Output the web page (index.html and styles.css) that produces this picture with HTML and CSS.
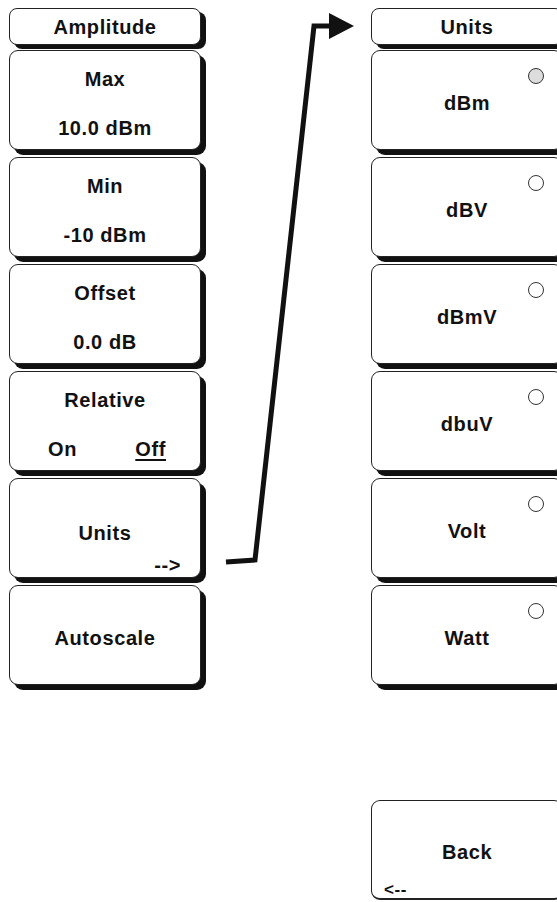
FILE: index.html
```html
<!DOCTYPE html>
<html>
<head>
<meta charset="utf-8">
<link rel="stylesheet" href="styles.css">
</head>
<body>
<div class="page">
  <div class="col">
    <div class="hdr">Amplitude</div>
    <div class="btn double"><div class="ln">Max</div><div class="ln">10.0 dBm</div></div>
    <div class="btn double"><div class="ln">Min</div><div class="ln">-10 dBm</div></div>
    <div class="btn double"><div class="ln">Offset</div><div class="ln">0.0 dB</div></div>
    <div class="btn double"><div class="ln">Relative</div><div class="ln onoff"><span>On</span><span class="sel">Off</span></div></div>
    <div class="btn withsub"><div class="ln">Units</div><div class="sub">--&gt;</div></div>
    <div class="btn single"><div class="ln">Autoscale</div></div>
  </div>
  <div class="col right">
    <div class="hdr">Units</div>
    <div class="btn single"><span class="radio on"></span><div class="ln">dBm</div></div>
    <div class="btn single"><span class="radio"></span><div class="ln">dBV</div></div>
    <div class="btn single"><span class="radio"></span><div class="ln">dBmV</div></div>
    <div class="btn single"><span class="radio"></span><div class="ln">dbuV</div></div>
    <div class="btn single"><span class="radio"></span><div class="ln">Volt</div></div>
    <div class="btn single"><span class="radio"></span><div class="ln">Watt</div></div>
    <div class="btn back"><div class="ln backlbl">Back</div><div class="backsub">&lt;--</div></div>
  </div>
  <svg class="connector" width="557" height="902" viewBox="0 0 557 902">
    <polyline points="226,562 255,560 314,26 332,26" fill="none" stroke="#111" stroke-width="5" stroke-linejoin="miter"/>
    <polygon points="329,13 354,26 329,39" fill="#111"/>
  </svg>
</div>
</body>
</html>
```

FILE: styles.css
```css
html, body {
  margin: 0;
  padding: 0;
  background: #fff;
  overflow: hidden;
  width: 557px;
  height: 902px;
}
.page {
  position: relative;
  display: flex;
  align-items: flex-start;
  gap: 170px;
  padding: 8px 0 0 9px;
  width: 557px;
  height: 902px;
  box-sizing: border-box;
  font-family: "Liberation Sans", Arial, sans-serif;
  font-weight: bold;
  font-size: 20px;
  letter-spacing: 0.6px;
  color: #111;
}
.col {
  display: flex;
  flex-direction: column;
  width: 192px;
  flex: 0 0 192px;
}
.hdr {
  flex-shrink: 0;
  box-sizing: border-box;
  height: 37px;
  border: 1px solid #222;
  border-radius: 8px;
  background: #fff;
  box-shadow: 5px 4px 0 #111;
  display: flex;
  align-items: center;
  justify-content: center;
  margin-bottom: 5px;
  padding-top: 2px;
}
.btn {
  flex-shrink: 0;
  position: relative;
  box-sizing: border-box;
  height: 100px;
  border: 1px solid #222;
  border-radius: 9px;
  background: #fff;
  box-shadow: 5px 5px 0 #111;
  display: flex;
  flex-direction: column;
  align-items: center;
  margin-bottom: 7px;
}
.ln {
  line-height: 22px;
  white-space: nowrap;
}
.single {
  justify-content: center;
  padding-top: 6px;
}
.double {
  justify-content: flex-start;
  padding-top: 17px;
  gap: 27px;
}
.onoff {
  align-self: stretch;
  display: flex;
  justify-content: space-between;
  padding: 0 34px 0 38px;
}
.sel {
  text-decoration: underline;
  text-underline-offset: 3px;
}
.withsub {
  justify-content: flex-start;
  padding-top: 43px;
}
.sub {
  align-self: stretch;
  text-align: right;
  padding-right: 19px;
  margin-top: 10px;
  line-height: 22px;
}
.radio {
  position: absolute;
  top: 17px;
  right: 18px;
  width: 16px;
  height: 16px;
  box-sizing: border-box;
  border: 1px solid #333;
  border-radius: 50%;
  background: #fff;
}
.radio.on {
  background: #ddd;
}
.back {
  margin-top: 108px;
  margin-bottom: 0;
  box-shadow: none;
  border-bottom: 2px solid #222;
  justify-content: flex-start;
}
.backlbl {
  flex: 1;
  display: flex;
  align-items: center;
  padding-top: 20px;
}
.backsub {
  align-self: flex-start;
  padding-left: 12px;
  font-size: 17px;
  line-height: 16px;
  margin-bottom: 0;
}
.connector {
  position: absolute;
  left: 0;
  top: 0;
  pointer-events: none;
}
```
